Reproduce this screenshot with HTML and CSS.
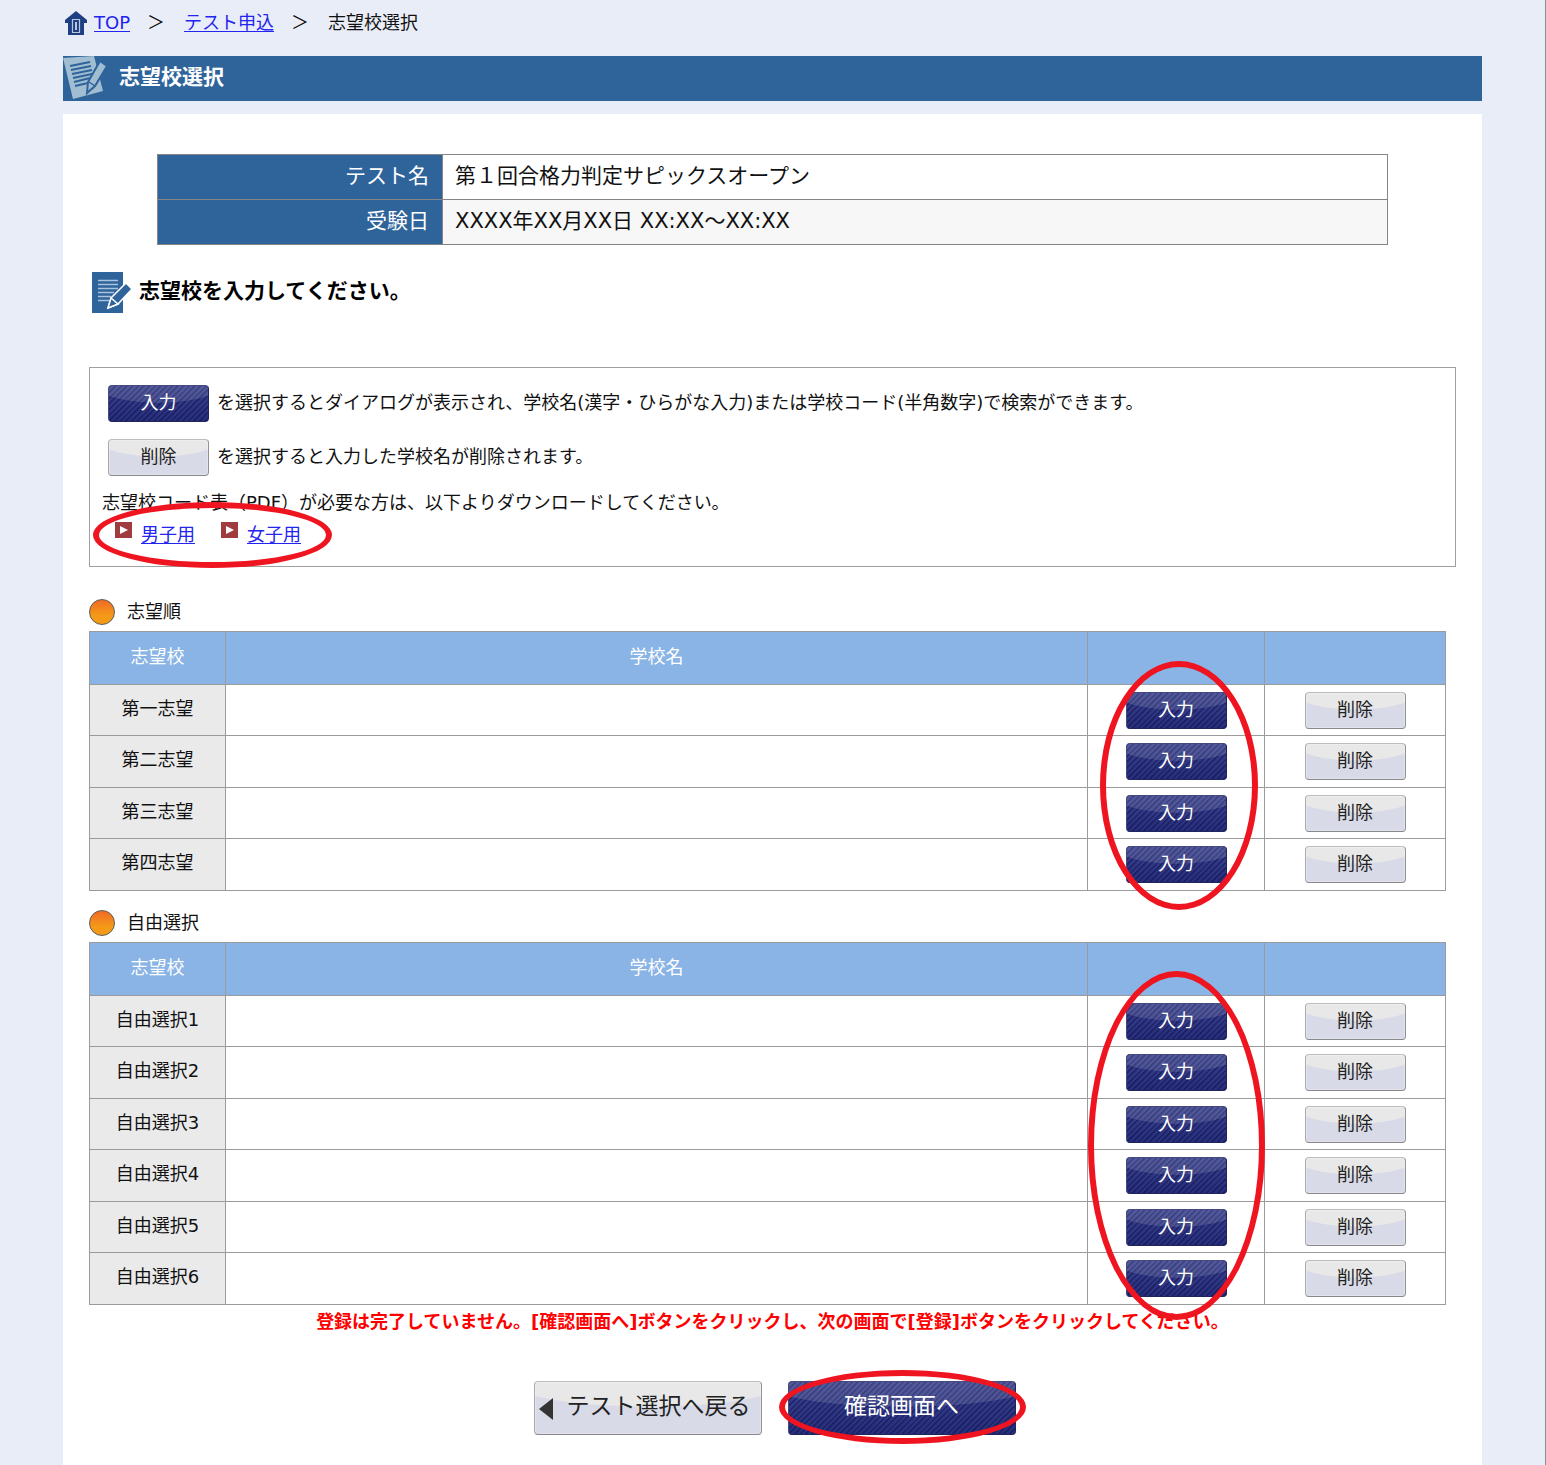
FILE: index.html
```html
<!DOCTYPE html>
<html lang="ja">
<head>
<meta charset="utf-8">
<meta name="viewport" content="width=device-width, initial-scale=1">
<title>志望校選択</title>
<link rel="stylesheet" href="styles.css">
</head>
<body>
<nav class="breadcrumb" aria-label="現在位置">
  <svg class="home-icon" viewBox="0 0 22 24" aria-hidden="true">
    <path d="M11 0 22 9v3h-3v12H3V12H0V9z" fill="#1f3f83"/>
    <path d="M7.500 8.500h7v13h-7z" fill="none" stroke="#b9c8e2" stroke-width="1.200"/>
    <path d="M10 11h2v8h-2z" fill="#b9c8e2"/>
  </svg>
  <a href="#">TOP</a>
  <span class="separator">＞</span>
  <a href="#">テスト申込</a>
  <span class="separator">＞</span>
  <span>志望校選択</span>
</nav>

<header class="banner">
  <svg class="banner-icon" viewBox="0 0 44 45" aria-hidden="true">
    <path d="M0 2 31 0l9 35-30 8z" fill="#a0bdd2"/>
    <path d="m7 10 20-4M8 14l20-4M9 18l20-4M10 22l19-4M11 26l16-4M12 30l13-3" stroke="#2f649b" stroke-width="2"/>
    <path d="m37 5 7 5-12 20-8 7 1-11z" fill="#a0bdd2" stroke="#2f649b" stroke-width="2"/>
    <path d="m26 26 6 4" stroke="#2f649b" stroke-width="1.500"/>
  </svg>
  <h1>志望校選択</h1>
</header>

<main class="panel">
  <table class="exam">
    <tr><th scope="row">テスト名</th><td>第１回合格力判定サピックスオープン</td></tr>
    <tr><th scope="row">受験日</th><td>XXXX年XX月XX日 XX:XX～XX:XX</td></tr>
  </table>

  <div class="lead">
    <svg class="lead-icon" viewBox="0 0 40 41" aria-hidden="true">
      <path d="M0 0h31v41H0z" fill="#2f649b"/>
      <path d="M6 8.500h20M6 12.500h20M6 16.500h20M6 20.500h16M6 24.500h13M6 28.500h11" stroke="#a9c3df" stroke-width="1.500"/>
      <path d="m34 11 6 6-14 15-10 4 3-10z" fill="#2f649b" stroke="#fff" stroke-width="1.500"/>
      <path d="m19 26 7 6-10 4z" fill="#2f649b" stroke="#fff" stroke-width="1.500"/>
    </svg>
    <h2>志望校を入力してください。</h2>
  </div>

  <section class="guide">
    <div class="guide-row"><button type="button" class="btn btn-dark">入力</button><span>を選択するとダイアログが表示され、学校名(漢字・ひらがな入力)または学校コード(半角数字)で検索ができます。</span></div>
    <div class="guide-row"><button type="button" class="btn btn-light">削除</button><span>を選択すると入力した学校名が削除されます。</span></div>
    <p>志望校コード表（PDF）が必要な方は、以下よりダウンロードしてください。</p>
    <div class="downloads">
      <span class="download"><svg viewBox="0 0 17 16" aria-hidden="true"><path d="M0 0h17v16H0z" fill="#a03c40"/><path d="m5 4 8 4-8 4z" fill="#fff"/></svg><a href="#">男子用</a></span>
      <span class="download"><svg viewBox="0 0 17 16" aria-hidden="true"><path d="M0 0h17v16H0z" fill="#a03c40"/><path d="m5 4 8 4-8 4z" fill="#fff"/></svg><a href="#">女子用</a></span>
      <span class="ring ring-downloads"></span>
    </div>
  </section>

  <h3 class="group-title">志望順</h3>
  <div class="choices">
    <table>
      <colgroup><col class="col-rank"><col><col class="col-enter"><col class="col-delete"></colgroup>
      <thead><tr><th scope="col">志望校</th><th scope="col">学校名</th><th></th><th></th></tr></thead>
      <tbody>
        <tr><th scope="row">第一志望</th><td></td><td><button type="button" class="btn btn-dark">入力</button></td><td><button type="button" class="btn btn-light">削除</button></td></tr>
        <tr><th scope="row">第二志望</th><td></td><td><button type="button" class="btn btn-dark">入力</button></td><td><button type="button" class="btn btn-light">削除</button></td></tr>
        <tr><th scope="row">第三志望</th><td></td><td><button type="button" class="btn btn-dark">入力</button></td><td><button type="button" class="btn btn-light">削除</button></td></tr>
        <tr><th scope="row">第四志望</th><td></td><td><button type="button" class="btn btn-dark">入力</button></td><td><button type="button" class="btn btn-light">削除</button></td></tr>
      </tbody>
    </table>
    <span class="ring ring-ranked"></span>
  </div>

  <h3 class="group-title">自由選択</h3>
  <div class="choices">
    <table>
      <colgroup><col class="col-rank"><col><col class="col-enter"><col class="col-delete"></colgroup>
      <thead><tr><th scope="col">志望校</th><th scope="col">学校名</th><th></th><th></th></tr></thead>
      <tbody>
        <tr><th scope="row">自由選択1</th><td></td><td><button type="button" class="btn btn-dark">入力</button></td><td><button type="button" class="btn btn-light">削除</button></td></tr>
        <tr><th scope="row">自由選択2</th><td></td><td><button type="button" class="btn btn-dark">入力</button></td><td><button type="button" class="btn btn-light">削除</button></td></tr>
        <tr><th scope="row">自由選択3</th><td></td><td><button type="button" class="btn btn-dark">入力</button></td><td><button type="button" class="btn btn-light">削除</button></td></tr>
        <tr><th scope="row">自由選択4</th><td></td><td><button type="button" class="btn btn-dark">入力</button></td><td><button type="button" class="btn btn-light">削除</button></td></tr>
        <tr><th scope="row">自由選択5</th><td></td><td><button type="button" class="btn btn-dark">入力</button></td><td><button type="button" class="btn btn-light">削除</button></td></tr>
        <tr><th scope="row">自由選択6</th><td></td><td><button type="button" class="btn btn-dark">入力</button></td><td><button type="button" class="btn btn-light">削除</button></td></tr>
      </tbody>
    </table>
    <span class="ring ring-free"></span>
  </div>

  <p class="notice">登録は完了していません。[確認画面へ]ボタンをクリックし、次の画面で[登録]ボタンをクリックしてください。</p>

  <div class="actions">
    <button type="button" class="btn btn-light btn-large btn-back"><svg viewBox="0 0 14 22" aria-hidden="true"><path d="M14 0v22L0 11z" fill="#333"/></svg>テスト選択へ戻る</button>
    <div class="next">
      <button type="button" class="btn btn-dark btn-large">確認画面へ</button>
      <span class="ring ring-next"></span>
    </div>
  </div>
</main>
</body>
</html>
```
FILE: styles.css
```css
*, *::before { box-sizing: border-box; }

body {
  display: flex;
  flex-direction: column;
  min-height: 100vh;
  margin: 0;
  padding: 0 63px;
  border-right: 1px solid #8c8c8c;
  background: #e9edf7;
  color: #111;
  font: 18px/28px "DejaVu Sans", "Noto Sans CJK JP", sans-serif;
}

h1, h2, h3, p { margin: 0; }
a { color: #2424f0; text-underline-offset: 2px; text-decoration-thickness: 1px; }
table { width: 100%; border-collapse: collapse; table-layout: fixed; }
th { font-weight: normal; }

.breadcrumb {
  display: flex;
  align-items: center;
  height: 46px;
  padding-left: 2px;
}
.home-icon { width: 22px; height: 24px; margin-right: 7px; }
.separator { width: 54px; padding-left: 17px; }

.banner {
  display: flex;
  align-items: center;
  gap: 12px;
  height: 45px;
  margin: 10px 0 13px;
  background: #2f649b;
  color: #fff;
}
.banner-icon { width: 44px; height: 45px; }
.banner h1, .lead h2 { font-size: 21px; line-height: 28px; }
.banner h1 { padding-bottom: 4px; }

.panel {
  flex: 1;
  padding: 40px 26px 30px;
  background: #fff;
}

.exam { width: auto; min-width: calc(100% - 136px); margin: 0 68px; font-size: 21px; }
.exam th, .exam td { height: 45px; padding: 0 13px 2px 12px; border: 1px solid #858585; }
.exam th { width: 285px; background: #2f649b; color: #fff; text-align: right; }
.exam tr:nth-child(2) td { background: #f7f7f7; }

.lead {
  display: flex;
  gap: 7px;
  height: 41px;
  margin: 27px 0 54px;
  padding: 0 3px;
}
.lead-icon { width: 40px; height: 41px; }
.lead h2 { padding-top: 5px; color: #000; }

.guide {
  margin-bottom: 31px;
  padding: 17px 12px 15px;
  border: 1px solid #a0a0a0;
}
.guide-row {
  display: flex;
  align-items: center;
  gap: 8px;
  margin-bottom: 17px;
  padding-left: 6px;
}
.guide-row span { padding-bottom: 2px; }
.guide p, .downloads { line-height: 32px; }
.guide p { margin-top: -6px; }
.downloads {
  position: relative;
  display: flex;
  gap: 26px;
  padding-left: 13px;
}
.download { display: flex; gap: 9px; }
.download svg { width: 17px; height: 16px; margin-top: 3px; }

.group-title {
  display: flex;
  align-items: center;
  gap: 12px;
  margin: 18px 0 5px;
  font-size: 18px;
  font-weight: normal;
}
.group-title::before {
  content: "";
  width: 26px;
  height: 26px;
  border: 1px solid #5e5a50;
  border-radius: 50%;
  background: linear-gradient(#f06a26, #f49a18 65%);
}

.choices { position: relative; margin-right: 10px; }
.col-rank { width: 136px; }
.col-enter { width: 177px; }
.col-delete { width: 181px; }
.choices th, .choices td {
  height: 51px;
  padding: 0;
  border: 1px solid #9b9b9b;
  text-align: center;
}
.choices tr:nth-child(even) > * { height: 52px; }
.choices thead th { height: 53px; padding-bottom: 2px; background: #89b4e5; color: #fff; }
.choices tbody th { padding-bottom: 3px; background: #eaeaea; }

.btn {
  width: 101px;
  height: 37px;
  padding: 0 0 1px;
  border: 1px solid;
  border-radius: 4px;
  font: inherit;
  line-height: 28px;
}
.choices .btn { display: block; margin: 0 auto; }
.btn-dark {
  border-color: #45497f #20255e #20255e #45497f;
  background:
    radial-gradient(ellipse 62% 48% at 50% 0, rgba(255, 255, 255, .12) 0 98%, transparent 100%),
    repeating-linear-gradient(135deg, rgba(8, 12, 62, .45) 0 1px, transparent 2px 4px),
    linear-gradient(#3a4290, #272e7c);
  color: #fff;
}
.btn-light {
  border-color: #bcbcc0 #929296 #88888c #aaaaae;
  background:
    radial-gradient(ellipse 62% 48% at 50% 0, #e8e8e9 0 96%, transparent 100%),
    #d9dae7;
  box-shadow: inset 0 0 0 1px rgba(255, 255, 255, .25);
  color: #222;
}
.btn-large { width: 228px; height: 54px; padding-bottom: 4px; font-size: 23px; }
.btn-back {
  display: flex;
  align-items: center;
  gap: 14px;
  padding-left: 4px;
  white-space: nowrap;
}
.btn-back svg { flex: none; width: 14px; height: 22px; margin-top: 6px; }

.notice {
  margin-top: 3px;
  color: #f00;
  font-weight: bold;
  text-align: center;
}
.actions {
  display: flex;
  justify-content: center;
  gap: 26px;
  margin-top: 45px;
  padding-left: 4px;
}
.next { position: relative; }
.next .btn { display: block; }

/* Hand-drawn style emphasis laid over the controls */
.ring {
  position: absolute;
  border: 6px solid #ef1520;
  border-radius: 50%;
  pointer-events: none;
}
.ring-downloads { top: -17px; left: -9px; width: 239px; height: 66px; }
.ring-ranked { top: 30px; right: 188px; width: 158px; height: 249px; }
.ring-free { top: 29px; right: 181px; width: 177px; height: 349px; }
.ring-next { inset: -11px -10px -9px -9px; }
```
